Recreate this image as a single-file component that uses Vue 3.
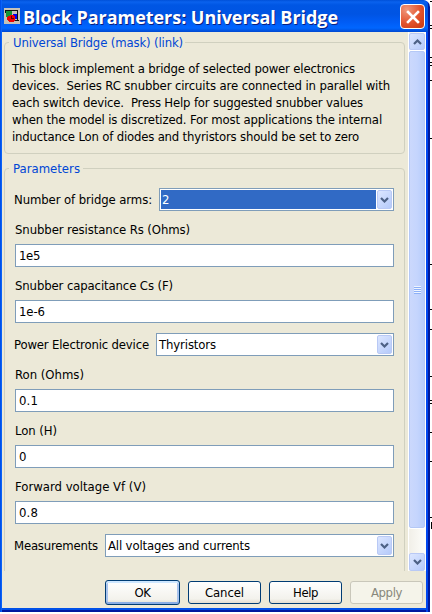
<template>
  <div class="desktop">
    <svg class="backdrop" width="2" height="614" shape-rendering="crispEdges">
      <rect v-for="y in ticks" :key="y" x="0" :y="y" width="2" height="1" />
      <rect x="1" y="522" width="1" height="7" />
    </svg>

    <div class="window">
      <header class="titlebar">
        <svg class="app-icon" width="16" height="16" viewBox="0 0 16 16" shape-rendering="crispEdges">
          <rect width="16" height="16" fill="#c5c2b8" />
          <path d="M2 3h6v6H2z" fill="#159437" />
          <path d="M9 6h5v5H9z" fill="#0000f0" />
          <path d="M1 2.500h12.500V12M11 12.500h4M1.500 2v3" fill="none" stroke="#111" />
          <path d="M4 8h2V7h4v1h1v5h-1v1H5v-1H4v-1H3V9h1z" fill="#f00000" />
          <path d="M7.500 8v3M7 10.500h3" stroke="#600" fill="none" />
        </svg>
        <h1 v-fit="315">Block Parameters: Universal Bridge</h1>
        <button class="close">
          <svg width="22" height="22" viewBox="0 0 22 22">
            <path d="M6 6l10 10M16 6L6 16" stroke="#fff" stroke-width="2.600" stroke-linecap="square" />
          </svg>
        </button>
      </header>

      <main class="content">
        <div class="pane">
          <fieldset class="group about">
            <legend><span v-fit="170">Universal Bridge (mask) (link)</span></legend>
            <p v-for="line in description" :key="line.text">
              <span v-fit="line.width">{{ line.text }}</span>
            </p>
          </fieldset>

          <fieldset class="group params">
            <legend><span v-fit="67">Parameters</span></legend>
            <div v-for="f in fields" :key="f.label" class="field" :class="f.type">
              <label><span v-fit="f.width">{{ f.label }}</span></label>
              <div class="box" :class="{ active: f.active }">
                <div class="value"><span v-fit="f.valueWidth">{{ f.value }}</span></div>
                <i v-if="f.type === 'select'" class="arrow">
                  <svg width="9" height="6" viewBox="0 0 9 6"><path d="M1 1l3.500 3.500L8 1" /></svg>
                </i>
              </div>
            </div>
          </fieldset>
        </div>

        <div class="scrollbar">
          <i class="arrow up">
            <svg width="9" height="6" viewBox="0 0 9 6"><path d="M1 5l3.500-3.500L8 5" /></svg>
          </i>
          <div class="thumb"><b></b><b></b><b></b><b></b></div>
          <i class="arrow down">
            <svg width="9" height="6" viewBox="0 0 9 6"><path d="M1 1l3.500 3.500L8 1" /></svg>
          </i>
        </div>
      </main>

      <footer class="buttons">
        <button class="btn default"><span v-fit="16">OK</span></button>
        <button class="btn"><span v-fit="39">Cancel</span></button>
        <button class="btn"><span v-fit="25">Help</span></button>
        <button class="btn" disabled><span v-fit="31">Apply</span></button>
      </footer>
    </div>
  </div>
</template>

<script setup>
const ticks = [1, 25, 28, 57, 62, 65, 80, 138, 264, 309, 329, 376, 400, 403, 432, 461, 517]

const description = [
  { text: 'This block implement a bridge of selected power electronics', width: 343 },
  { text: 'devices.  Series RC snubber circuits are connected in parallel with', width: 378 },
  { text: 'each switch device.  Press Help for suggested snubber values', width: 351 },
  { text: 'when the model is discretized. For most applications the internal', width: 370 },
  { text: 'inductance Lon of diodes and thyristors should be set to zero', width: 347 },
]

const fields = [
  { type: 'select', label: 'Number of bridge arms:', width: 138, value: '2', valueWidth: 8, active: true },
  { type: 'text', label: 'Snubber resistance Rs (Ohms)', width: 175, value: '1e5', valueWidth: 21 },
  { type: 'text', label: 'Snubber capacitance Cs (F)', width: 158, value: '1e-6', valueWidth: 26 },
  { type: 'select', label: 'Power Electronic device', width: 135, value: 'Thyristors', valueWidth: 57 },
  { type: 'text', label: 'Ron (Ohms)', width: 69, value: '0.1', valueWidth: 19 },
  { type: 'text', label: 'Lon (H)', width: 42, value: '0', valueWidth: 8 },
  { type: 'text', label: 'Forward voltage Vf (V)', width: 131, value: '0.8', valueWidth: 19 },
  { type: 'select', label: 'Measurements', width: 84, value: 'All voltages and currents', valueWidth: 142 },
]

// spread the letters so that a line takes the given width
const vFit = {
  mounted(el, { value }) {
    const natural = el.getBoundingClientRect().width
    el.style.letterSpacing = `${(value - natural) / el.textContent.length}px`
  },
}
</script>

<style>
body {
  margin: 0;
  overflow: hidden;
  background: #fff;
}
</style>

<style scoped>
* {
  box-sizing: border-box;
}
.desktop {
  position: relative;
  width: 432px;
  height: 614px;
  background: #fff;
  font: 13px/17px "DejaVu Sans Condensed", "DejaVu Sans", sans-serif;
  color: #000;
}
.desktop span,
h1 {
  display: inline-block;
  white-space: pre;
}
.backdrop {
  position: absolute;
  right: 0;
  top: 0;
}
.window {
  width: 430px;
  height: 612px;
  padding: 0 4px 4px 2px;
  border-radius: 0 7px 0 0;
  background: linear-gradient(90deg, #0050e8 0 1px, #0a62f8 1px 2px, transparent 2px 426px, #0046ee 426px 428px, #001a9c 428px),
    linear-gradient(#0050e8 0 610px, #0018a0 610px);
}
.titlebar {
  display: flex;
  align-items: center;
  height: 32px;
  margin-right: -2px;
  padding: 0 3px 0 2px;
  border-radius: 0 6px 0 0;
  background: linear-gradient(#0050d8 0, #0a62ee 2px, #0056e4 5px, #0054e3 14px, #005cf5 22px, #0066ff 28px, #0048d0 32px);
}
.app-icon {
  flex: none;
}
h1 {
  margin: 1px 0 0 3px;
  font: bold 18px/24px "Open Sans", sans-serif;
  color: #fff;
  text-shadow: 1px 1px 0 #0a2080;
}
button {
  padding: 0;
  font: inherit;
}
.close {
  flex: none;
  width: 25px;
  height: 25px;
  margin: 1px 0 0 auto;
  border: 1px solid #fff;
  border-radius: 4px;
  background: radial-gradient(circle at 25% 20%, #f0987c, #e2522c 55%, #c83810);
}
.close svg {
  display: block;
  margin: 0.5px;
}
.content {
  display: flex;
  height: 539px;
  background: #ece9d8;
  overflow: hidden;
}
.pane {
  flex: 1;
  padding: 1px 3px 0 2px;
}
.group {
  position: relative;
  height: 112px;
  margin: 9px 0 0;
  padding: 17px 7px 0;
  border: 1px solid #d0d0bf;
  border-radius: 4px;
}
.params {
  height: 420px;
  margin-top: 14px;
  padding: 19px 10px 0;
}
legend {
  position: absolute;
  left: 4px;
  top: -9px;
  padding: 0 3px 0 4px;
  background: #ece9d8;
  color: #0046d5;
}
.about legend {
  padding-right: 2px;
}
p {
  margin: 0;
  height: 17px;
}
.field label {
  display: block;
  height: 33px;
  padding-top: 10px;
}
.box {
  display: flex;
  height: 23px;
  padding: 1px;
  border: 1px solid #7f9db9;
  background: #fff;
}
.value {
  flex: 1;
  padding: 1px 0 0 2px;
}
.select {
  display: flex;
  gap: 7px;
  margin-top: 10px;
}
.select:first-of-type {
  margin-top: 0;
}
.select label {
  height: 23px;
  padding-top: 3px;
  margin-left: -1px;
}
.select .box {
  flex: 1;
}
.select .value {
  padding-left: 1px;
}
.active .value {
  background: #316ac5;
  color: #fff;
  margin-right: 1px;
}
.arrow {
  display: flex;
  align-items: center;
  justify-content: center;
  width: 15px;
  border: 1px solid #b9c9f5;
  border-radius: 2px;
  background: linear-gradient(135deg, #dce6ff, #b5cafa);
}
.arrow path {
  fill: none;
  stroke: #4d6185;
  stroke-width: 2.2;
}
.scrollbar {
  display: flex;
  flex-direction: column;
  width: 18px;
  padding: 1px 1px 0 0;
  border-left: 1px solid #fff;
  background: linear-gradient(90deg, #f1efe8, #fefefb);
}
.scrollbar .arrow {
  width: 16px;
  height: 17px;
}
.thumb {
  display: flex;
  flex-direction: column;
  align-items: center;
  justify-content: center;
  height: 477px;
  margin-top: 1px;
  border: 1px solid #b4c8f6;
  border-radius: 2px;
  background: linear-gradient(90deg, #cbd8fc, #c5d5fd 50%, #b7cdfb);
  box-shadow: 0 0 0 1px #fff;
}
.thumb b {
  width: 7px;
  height: 2px;
  background: linear-gradient(#eef4fe 1px, #8cb0f8 1px);
}
.scrollbar .down {
  height: 18px;
  margin-top: auto;
}
.buttons {
  display: flex;
  gap: 8px;
  height: 37px;
  padding: 10px 3px 0 0;
  justify-content: flex-end;
  background: #ece9d8;
}
.btn {
  width: 73px;
  height: 23px;
  border: 1px solid #003c74;
  border-radius: 3px;
  background: linear-gradient(#fff, #f3f2ec 80%, #e2ded2);
  color: #000;
}
.default {
  width: 75px;
  height: 25px;
  margin-top: -1px;
  box-shadow: inset 0 2px #cee7ff, inset 0 -2px #89ade4, inset 2px 0 #a9c4ee, inset -2px 0 #a9c4ee;
}
.btn:disabled {
  border-color: #c9c7ba;
  background: #f5f4ea;
  color: #87877b;
}
</style>
